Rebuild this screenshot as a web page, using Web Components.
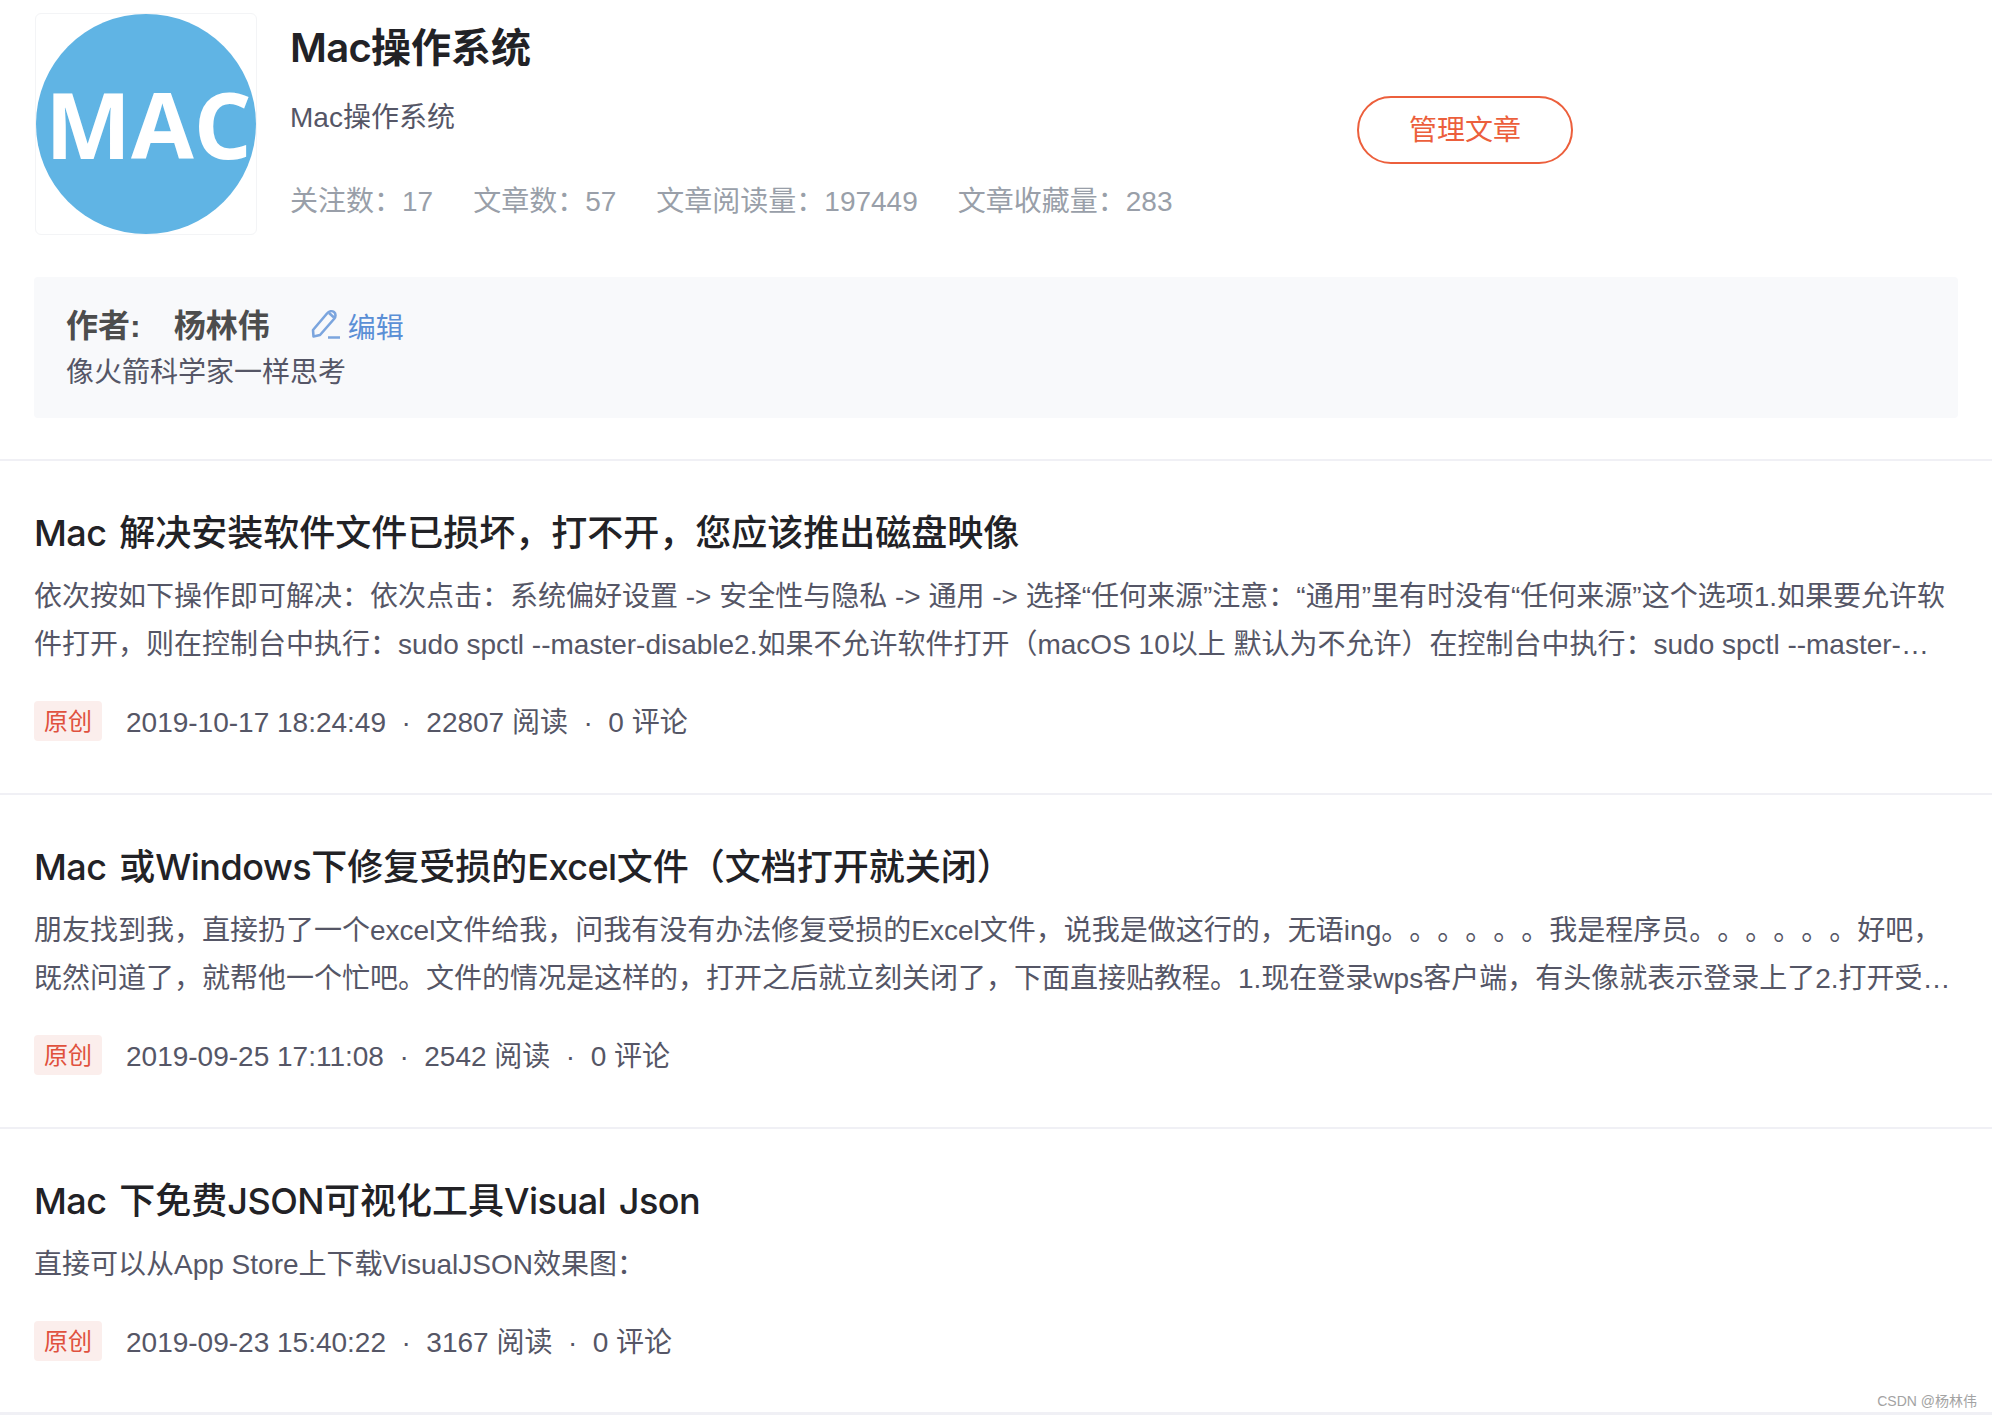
<!DOCTYPE html>
<html lang="zh"><head><meta charset="utf-8"><title>Mac操作系统</title>
<style>
html,body{margin:0;padding:0;background:#fff}
body{width:1992px;height:1416px;overflow:hidden;position:relative;font-family:"Liberation Sans","Noto Sans CJK SC",sans-serif;text-spacing-trim:space-all}
</style></head><body>
<column-page>
  <column-header title="Mac操作系统" desc="Mac操作系统">
    <stat-item label="关注数：" value="17"></stat-item>
    <stat-item label="文章数：" value="57"></stat-item>
    <stat-item label="文章阅读量：" value="197449"></stat-item>
    <stat-item label="文章收藏量：" value="283"></stat-item>
  </column-header>
  <author-card name="杨林伟">像火箭科学家一样思考</author-card>
  <article-row title="Mac 解决安装软件文件已损坏，打不开，您应该推出磁盘映像" date="2019-10-17 18:24:49" reads="22807" comments="0">依次按如下操作即可解决：依次点击：系统偏好设置 -&gt; 安全性与隐私 -&gt; 通用 -&gt; 选择“任何来源”注意：“通用”里有时没有“任何来源”这个选项1.如果要允许软件打开，则在控制台中执行：sudo spctl --master-disable2.如果不允许软件打开（macOS 10以上 默认为不允许）在控制台中执行：sudo spctl --master-…</article-row>
  <article-row title="Mac 或Windows下修复受损的Excel文件（文档打开就关闭）" date="2019-09-25 17:11:08" reads="2542" comments="0">朋友找到我，直接扔了一个excel文件给我，问我有没有办法修复受损的Excel文件，说我是做这行的，无语ing。。。。。。我是程序员。。。。。。好吧，既然问道了，就帮他一个忙吧。文件的情况是这样的，打开之后就立刻关闭了，下面直接贴教程。1.现在登录wps客户端，有头像就表示登录上了2.打开受…</article-row>
  <article-row single title="Mac 下免费JSON可视化工具Visual Json" date="2019-09-23 15:40:22" reads="3167" comments="0">直接可以从App Store上下载VisualJSON效果图：</article-row>
</column-page>
<water-mark>CSDN @杨林伟</water-mark>
<script>
function def(name, html, attrs){
  customElements.define(name, class extends HTMLElement{
    constructor(){super();this.attachShadow({mode:'open'})}
    connectedCallback(){
      let h=html;
      for(const a of attrs||[]){
        let v=this.getAttribute(a)||'';
        if(a==='title') v=v.replace(/[A-Za-z]+/g,m=>'<span class="lat">'+m+'</span>');
        h=h.split('{{'+a+'}}').join(v);
      }
      this.shadowRoot.innerHTML=h;
    }
  });
}
def('column-page',`<style>:host{display:block;width:1992px;border-bottom:3px solid #f0f0f5}</style><slot></slot>`);
def('stat-item',`<style>:host{display:inline-block}</style>{{label}}{{value}}`,['label','value']);
def('column-header',`<style>
:host{display:flex;padding:13px 0 0 35px;height:222px;box-sizing:content-box}
.logo{flex:none;width:222px;height:222px;box-sizing:border-box;border:1px solid #f3f4f6;border-radius:6px;display:flex;align-items:center;justify-content:center}
.circle{flex:none;width:220px;height:220px;box-sizing:border-box;padding-left:5px;border-radius:50%;background:#60b4e4;color:#fff;display:flex;align-items:center;justify-content:center;font:700 91px/1 "Open Sans",sans-serif;overflow:hidden;white-space:nowrap}
.info{flex:none;width:1067px;margin-left:33px;display:flex;flex-direction:column}
h1{margin:10px 0 0;font:600 40px/50px Inter,"Noto Sans CJK SC",sans-serif;color:#222226}
.lat{letter-spacing:-.7px}
.desc{margin-top:25px;font-size:28px;line-height:40px;color:#555666}
.stats{margin-top:44px;display:flex;gap:40px;font-size:28px;line-height:40px;color:#999fa9}
.btn{flex:none;align-self:flex-start;margin-top:83px;width:216px;height:68px;padding-bottom:5px;box-sizing:border-box;border:2px solid #ec5f3c;border-radius:34px;color:#ec5f3c;font-size:28px;display:flex;align-items:center;justify-content:center}
</style>
<div class="logo"><div class="circle">MAC</div></div>
<div class="info"><h1>{{title}}</h1><div class="desc">{{desc}}</div><div class="stats"><slot></slot></div></div>
<div class="btn">管理文章</div>`,['title','desc']);
def('author-card',`<style>
:host{display:block;margin:42px 34px 41px 34px;height:141px;box-sizing:border-box;padding:25px 32px 0;background:#f8f9fb;border-radius:4px;color:#555666;font-size:28px}
.top{display:flex;align-items:center;height:48px}
b{font-size:32px;color:#4d4d4d;font-weight:700;line-height:48px}
.name{margin-left:33px}
.edit{margin-left:40px;display:flex;align-items:center;color:#5a8fd6;font-size:28px}
svg{width:31px;height:31px;margin-right:7px;margin-top:-4px}
.bio{line-height:42px;margin-top:2px}
</style>
<div class="top"><b>作者:</b><b class="name">{{name}}</b><span class="edit"><svg viewBox="0 0 31 31" fill="none" stroke="#7ba5de" stroke-width="2.600"><path d="M3 21 17 4.500c2-2.300 5-3 7-1.500s2 4.500 0 7L10 26l-6.500 1.500z" stroke-linejoin="round"/><path d="M19 4l5 4.500" /><path d="M18 28.500h12" stroke-width="2.500"/></svg>编辑</span></div>
<div class="bio"><slot></slot></div>`,['name']);
def('article-row',`<style>
:host{display:block;border-top:2px solid #f0f0f5;padding:46px 34px 52px}
:host([single]){padding-bottom:51px}
h2{margin:0;padding-top:1px;height:49px;font:500 36px/50px Inter,"Noto Sans CJK SC",sans-serif;color:#222226;word-spacing:3px}
.lat{letter-spacing:-.5px}
.ex{margin-top:16px;font-size:28px;line-height:48px;height:96px;color:#555666;word-break:break-all;width:1924px;overflow:hidden}
:host([single]) .ex{height:48px}
.meta{margin-top:32px;display:flex;align-items:flex-start;height:40px;font-size:28px;color:#555666}
.tag{flex:none;width:68px;height:40px;padding-bottom:3px;box-sizing:border-box;margin-right:24px;border-radius:4px;background:#fbeeec;color:#e0513d;font-size:24px;display:flex;align-items:center;justify-content:center}
.line{display:block;line-height:40px;padding-top:2px}
.dot{margin:0 15.500px}
</style>
<h2>{{title}}</h2>
<div class="ex"><slot></slot></div>
<div class="meta"><span class="tag">原创</span><span class="line">{{date}}<span class="dot">·</span>{{reads}} 阅读<span class="dot">·</span>{{comments}} 评论</span></div>`,['title','date','reads','comments']);
def('water-mark',`<style>:host{position:absolute;right:15px;top:1391px;font-size:14px;line-height:20px;color:#a3a3a3}</style><slot></slot>`);
</script>
</body></html>
